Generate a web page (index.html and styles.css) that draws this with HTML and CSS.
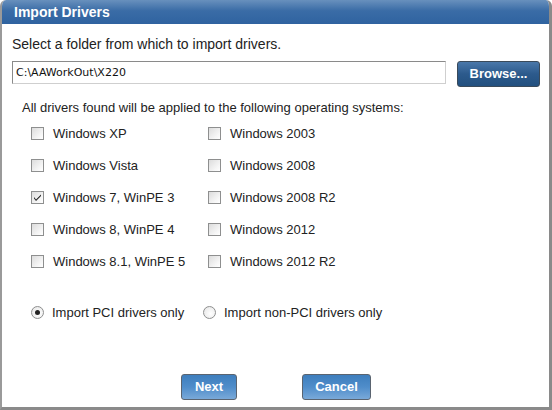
FILE: index.html
```html
<!DOCTYPE html>
<html>
<head>
<meta charset="utf-8">
<link rel="stylesheet" href="styles.css">
</head>
<body>
<div class="dialog">
  <div class="titlebar">Import Drivers</div>
  <div class="body">
    <div class="prompt">Select a folder from which to import drivers.</div>
    <div class="pathrow">
      <div class="pathinput">C:\AAWorkOut\X220</div>
      <div class="btn dark">Browse...</div>
    </div>
    <div class="prompt2">All drivers found will be applied to the following operating systems:</div>
    <div class="osgrid">
      <div class="col">
        <div class="opt"><span class="cb"></span><span>Windows XP</span></div>
        <div class="opt"><span class="cb"></span><span>Windows Vista</span></div>
        <div class="opt"><span class="cb checked"><svg width="11" height="11" viewBox="0 0 11 11"><path d="M2 5 L4 7.5 L9 2.5 L9 4 L4 9 L2 6.5 Z" fill="#222"/></svg></span><span>Windows 7, WinPE 3</span></div>
        <div class="opt"><span class="cb"></span><span>Windows 8, WinPE 4</span></div>
        <div class="opt"><span class="cb"></span><span>Windows 8.1, WinPE 5</span></div>
      </div>
      <div class="col">
        <div class="opt"><span class="cb"></span><span>Windows 2003</span></div>
        <div class="opt"><span class="cb"></span><span>Windows 2008</span></div>
        <div class="opt"><span class="cb"></span><span>Windows 2008 R2</span></div>
        <div class="opt"><span class="cb"></span><span>Windows 2012</span></div>
        <div class="opt"><span class="cb"></span><span>Windows 2012 R2</span></div>
      </div>
    </div>
    <div class="radios">
      <div class="ropt first"><span class="rb on"></span><span>Import PCI drivers only</span></div>
      <div class="ropt"><span class="rb"></span><span>Import non-PCI drivers only</span></div>
    </div>
    <div class="actions">
      <div class="btn light next">Next</div>
      <div class="btn light cancel">Cancel</div>
    </div>
  </div>
</div>
</body>
</html>
```

FILE: styles.css
```css
html, body {
  margin: 0;
  padding: 0;
  background: #ffffff;
  width: 552px;
  height: 410px;
  overflow: hidden;
}
body {
  font-family: "Liberation Sans", Arial, sans-serif;
  font-size: 13px;
  color: #222;
}
.dialog {
  box-sizing: border-box;
  width: 552px;
  height: 410px;
  border-left: 2px solid #9a9a9a;
  border-right: 3px solid #8a8a8a;
  border-bottom: 3px solid #8a8a8a;
  border-radius: 6px 6px 0 0;
  background: #fff;
  overflow: hidden;
}
.titlebar {
  height: 24px;
  background: linear-gradient(#6890bd, #3a6ca6 45%, #2f63a0);
  color: #fff;
  font-family: "Liberation Sans", Arial, sans-serif;
  font-weight: bold;
  font-size: 14px;
  line-height: 24px;
  padding-left: 12px;
}
.body {
  padding: 12px 0 0 10px;
}
.prompt {
  font-size: 14px;
  line-height: 16px;
}
.pathrow {
  display: flex;
  align-items: flex-start;
  margin-top: 9px;
}
.pathinput {
  box-sizing: border-box;
  width: 434px;
  height: 23px;
  border: 1px solid #8a8a8a;
  border-right-color: #cfcfcf;
  border-bottom-color: #cfcfcf;
  font-family: "DejaVu Sans", Verdana, sans-serif;
  font-size: 11px;
  line-height: 21px;
  padding-left: 3px;
  color: #111;
}
.btn {
  box-sizing: border-box;
  color: #fff;
  font-family: "Liberation Sans", Arial, sans-serif;
  font-weight: bold;
  font-size: 13px;
  text-align: center;
  border-radius: 3px;
}
.btn.dark {
  margin-left: 11px;
  width: 83px;
  height: 26px;
  line-height: 24px;
  background: linear-gradient(#4a78aa, #2c5a8c 50%, #22507f);
  border: 1px solid #3a4a5a;
}
.prompt2 {
  margin-top: 13px;
  margin-left: 10px;
  line-height: 16px;
}
.osgrid {
  display: flex;
  margin-left: 19px;
  margin-top: 8px;
}
.col {
  display: flex;
  flex-direction: column;
  gap: 14px;
}
.col:first-child {
  width: 177px;
}
.opt {
  display: flex;
  align-items: center;
  height: 18px;
}
.cb {
  box-sizing: border-box;
  width: 13px;
  height: 13px;
  border: 1px solid #8e8f8f;
  background: linear-gradient(135deg, #dcdcdc, #f6f6f6 70%, #fff);
  margin-right: 9px;
  display: flex;
  align-items: center;
  justify-content: center;
}
.cb svg {
  display: block;
}
.radios {
  display: flex;
  margin-top: 33px;
  margin-left: 19px;
}
.ropt {
  display: flex;
  align-items: center;
  height: 18px;
}
.ropt.first {
  width: 172px;
}
.rb {
  box-sizing: border-box;
  width: 13px;
  height: 13px;
  border-radius: 50%;
  border: 1px solid #8e8f8f;
  background: radial-gradient(circle at 60% 60%, #fff, #ececec 70%, #d8d8d8);
  margin-right: 8px;
  position: relative;
}
.rb.on::after {
  content: "";
  position: absolute;
  left: 3px;
  top: 3px;
  width: 5px;
  height: 5px;
  border-radius: 50%;
  background: #222;
}
.actions {
  display: flex;
  margin-top: 53px;
  margin-left: 169px;
}
.btn.light {
  height: 26px;
  line-height: 24px;
  background: linear-gradient(#3e7ebd, #4f8dca 50%, #79a9d9);
  border: 1px solid #5a6470;
}
.next {
  width: 56px;
}
.cancel {
  width: 69px;
  margin-left: 65px;
}
```
